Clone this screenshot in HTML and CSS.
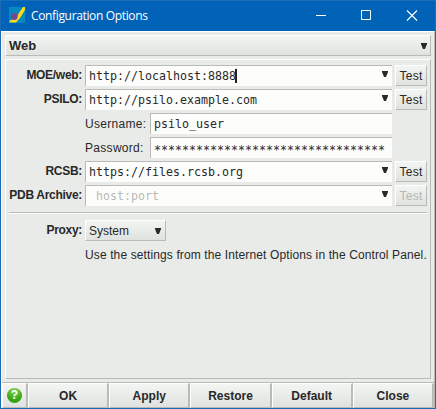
FILE: index.html
```html
<!DOCTYPE html>
<html lang="en">
<head>
<meta charset="utf-8">
<title>Configuration Options</title>
<link rel="stylesheet" href="styles.css">
</head>
<body>
<div class="window">
  <header class="titlebar">
    <svg class="app-icon" width="16" height="16" viewBox="0 0 16 16"><rect width="16" height="16" fill="#0788be"/><path d="M16 0v3l-5 8-4 4.500H1L0 14l7-3 3-5 4-6z" fill="#ffdc18"/><circle cx="5.300" cy="9.500" r="3.400" fill="#704b91"/></svg>
    <h1 class="title">Configuration Options</h1>
    <svg class="controls" width="104" height="12" viewBox="0 0 104 12" fill="none" stroke="#fff"><path d="M0 5.500h10M45.500.5h9v9h-9z"/><path d="M91 .5l10 10M101 .5l-10 10" stroke-width="1.100"/></svg>
  </header>
  <main class="client">
    <div class="section"><span>Web</span><svg class="arrow" width="6" height="7" viewBox="0 0 6 7"><path d="M0 0h6v1L4 6H2L0 1z"/></svg></div>
    <div class="panel">
      <div class="row"><label class="name">MOE/web:</label><div class="field"><span class="focused">http://localhost:8888</span><svg class="arrow" width="6" height="7" viewBox="0 0 6 7"><path d="M0 0h6v1L4 6H2L0 1z"/></svg></div><button class="test">Test</button></div>
      <div class="row"><label class="name">PSILO:</label><div class="field"><span>http://psilo.example.com</span><svg class="arrow" width="6" height="7" viewBox="0 0 6 7"><path d="M0 0h6v1L4 6H2L0 1z"/></svg></div><button class="test">Test</button></div>
      <div class="row sub"><label class="sublabel">Username:</label><div class="field"><span>psilo_user</span></div></div>
      <div class="row sub"><label class="sublabel">Password:</label><div class="field"><span class="secret">*********************************</span></div></div>
      <div class="row"><label class="name">RCSB:</label><div class="field"><span>https://files.rcsb.org</span><svg class="arrow" width="6" height="7" viewBox="0 0 6 7"><path d="M0 0h6v1L4 6H2L0 1z"/></svg></div><button class="test">Test</button></div>
      <div class="row"><label class="name">PDB Archive:</label><div class="field"><span class="placeholder">host:port</span><svg class="arrow" width="6" height="7" viewBox="0 0 6 7"><path d="M0 0h6v1L4 6H2L0 1z"/></svg></div><button class="test" disabled>Test</button></div>
      <div class="rule"></div>
      <div class="row"><label class="name">Proxy:</label><div class="select"><span>System</span><svg class="arrow" width="6" height="7" viewBox="0 0 6 7"><path d="M0 0h6v1L4 6H2L0 1z"/></svg></div></div>
      <p class="hint">Use the settings from the Internet Options in the Control Panel.</p>
    </div>
    <footer class="actions">
      <button class="help"><span>?</span></button>
      <button>OK</button><button>Apply</button><button>Restore</button><button>Default</button><button>Close</button>
    </footer>
  </main>
</div>
</body>
</html>
```

FILE: styles.css
```css
* { box-sizing: border-box; }
body { margin: 0; overflow: hidden; font: 12px "Liberation Sans", sans-serif; color: #282828; }
.window { display: flex; flex-direction: column; width: 436px; height: 409px; border: 1px solid #1c6cb5; background: #0063b8; }
.titlebar { display: flex; align-items: center; height: 30px; padding: 0 15px 0 8px; color: #fff; }
.app-icon { margin-top: -2px; }
.title { flex: 1; margin: -2px 0 0 6px; font: 12px "Open Sans", sans-serif; letter-spacing: -.35px; white-space: nowrap; }
.controls { width: 104px; }
.client { display: flex; flex: 1; flex-direction: column; background: #e9ebe8; border: 1px solid #fff; border-right-color: #b9bbb8; border-bottom: 0; padding-top: 3px; }
.section { display: flex; align-items: center; justify-content: space-between; height: 21px; margin: 0 3px; padding: 0 3px 0 3px; border: 1px solid #fff; border-color: #fff #b9bbb8 #b9bbb8 #fff; background: linear-gradient(#f3f5f2, #dfe2de); font-weight: bold; font-size: 13px; }
.arrow { flex: none; fill: #282828; }
.section .arrow { margin-top: 2px; }
.field .arrow { margin-top: -4px; }
.select .arrow { margin-top: 2px; }
.panel { height: 320px; margin: 3px 3px 0; padding: 5px 3px 0; border: 1px solid #fff; border-color: #fff #b9bbb8 #b9bbb8 #fff; }
.row { display: flex; height: 21px; margin-bottom: 3px; }
.name { width: 76px; padding-right: 3px; line-height: 21px; text-align: right; font-weight: bold; letter-spacing: -.3px; white-space: nowrap; }
.field { display: flex; align-items: center; justify-content: space-between; width: 307px; height: 21px; padding: 0 4px 0 3px; border: 1px solid #b9bbb8; border-width: 1px 0 0 1px; background: #fdfefc; font: 11.630px "DejaVu Sans Mono", monospace; }
.focused { height: 14px; padding-right: 1px; line-height: 14px; box-shadow: inset -2px 0 #222; }
.secret { padding-top: 3px; }
.placeholder { padding-left: 7px; color: #b8bab7; }
.sub { padding-left: 76px; }
.sublabel { width: 65px; line-height: 22px; letter-spacing: .3px; white-space: nowrap; }
.sub .field { width: 242px; }
button { padding: 0; border: 1px solid #fff; border-color: #fff #b9bbb8 #b9bbb8 #fff; border-radius: 0; background: linear-gradient(#f3f5f2, #dfe2de); color: #282828; font: bold 12px "Liberation Sans", sans-serif; }
.test { width: 32px; height: 21px; margin-left: 3px; font-weight: normal; letter-spacing: .3px; }
.test:disabled { color: #b4b6b3; }
.rule { height: 2px; margin: 6px 0; border-top: 1px solid #b9bbb8; border-bottom: 1px solid #fff; }
.select { display: flex; align-items: center; justify-content: space-between; width: 81px; height: 21px; padding: 0 4px 0 3px; border: 1px solid #fff; border-color: #fff #b9bbb8 #b9bbb8 #fff; background: linear-gradient(#f3f5f2, #dfe2de); }
.hint { margin: 0 0 0 76px; line-height: 22px; letter-spacing: .12px; white-space: nowrap; }
.actions { display: grid; grid-template-columns: 26px repeat(5, 1fr); height: 26px; margin-top: 3px; border-top: 1px solid #b9bbb8; }
.actions button { border-right-width: 2px; }
.actions .help { display: flex; align-items: center; justify-content: center; }
.help span { width: 15px; height: 15px; border-radius: 50%; background: radial-gradient(circle at 50% 20%, #86d653, #35a511 65%); color: #fff; line-height: 15px; }
```
